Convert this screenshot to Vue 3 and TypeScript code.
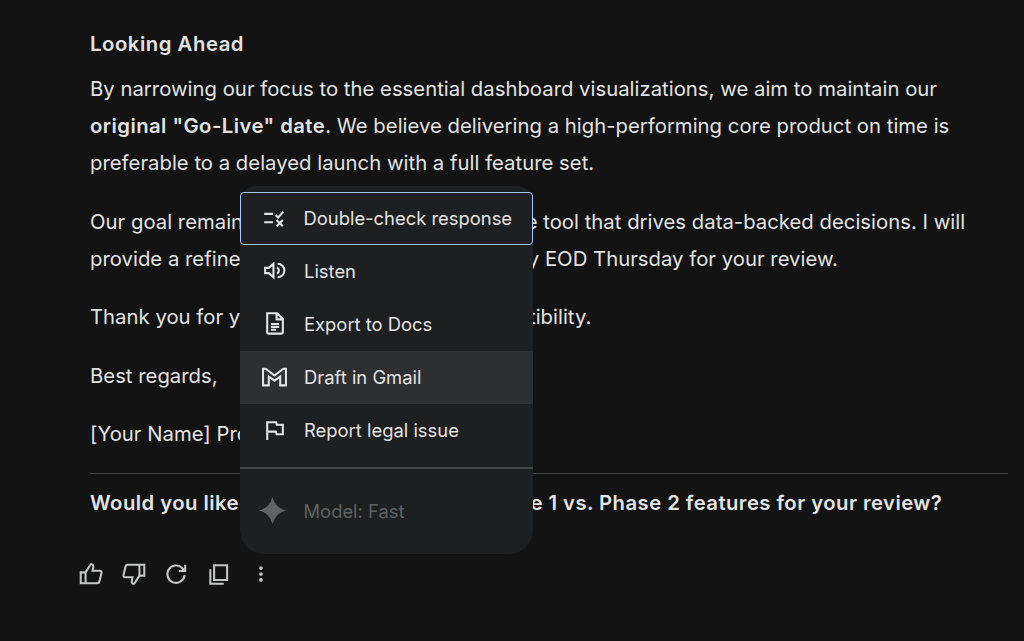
<script setup lang="ts">
const menu = [
  { id: 'check', label: 'Double-check response' },
  { id: 'listen', label: 'Listen' },
  { id: 'docs', label: 'Export to Docs' },
  { id: 'gmail', label: 'Draft in Gmail' },
  { id: 'flag', label: 'Report legal issue' },
]
</script>

<template>
  <main class="page">
    <article class="reply">
      <h3 class="title">Looking Ahead</h3>
      <p class="para">
        By narrowing our focus to the essential dashboard visualizations, we aim to maintain our<br />
        <strong>original "Go-Live" date</strong>. We believe delivering a high-performing core product on time is<br />
        preferable to a delayed launch with a full feature set.
      </p>
      <p class="para">
        Our goal remains to deliver a powerful, reliable tool that drives data-backed decisions. I will<br />
        provide a refined roadmap and firm timeline by EOD Thursday for your review.
      </p>
      <p class="para">Thank you for your understanding and compatibility.</p>
      <p class="para">Best regards,</p>
      <p class="para last">[Your Name] Project Manager</p>
      <hr class="rule" />
      <p class="follow">Would you like me to draft a list of the Phase 1 vs. Phase 2 features for your review?</p>
    </article>

    <div class="actions">
      <button class="act" aria-label="Good response">
        <svg viewBox="0 0 24 24"><path d="M2.500 10.500h4.500v10H2.500zM7 10.500l4.600-7.300c1.500-.6 2.700.4 2.500 2L13.400 9h6.800c1 0 1.800 1 1.500 2l-2 8.200c-.2.800-.9 1.300-1.700 1.300H7" /></svg>
      </button>
      <button class="act" aria-label="Bad response">
        <svg viewBox="0 0 24 24"><path d="M21.500 13.500H17v-10h4.500zM17 13.500l-4.600 7.300c-1.500.6-2.700-.4-2.500-2l.7-3.800H3.800c-1 0-1.800-1-1.500-2l2-8.200c.2-.8.9-1.300 1.700-1.300H17" /></svg>
      </button>
      <button class="act" aria-label="Redo">
        <svg viewBox="0 0 24 24"><path d="M20 13a8 8 0 1 1-2.300-6.500L20.500 9.300M20.500 3.500v5.800h-5.800" /></svg>
      </button>
      <button class="act" aria-label="Copy">
        <svg viewBox="0 0 24 24"><path d="M7.500 4h12v13.500h-12zM4 7.500V21h12.500" /></svg>
      </button>
      <button class="act" aria-label="More">
        <svg viewBox="0 0 24 24"><circle cx="12" cy="6.500" r="1.700" class="solid" /><circle cx="12" cy="12" r="1.700" class="solid" /><circle cx="12" cy="17.500" r="1.700" class="solid" /></svg>
      </button>
    </div>

    <div class="menu" role="menu">
      <button
        v-for="m in menu"
        :key="m.id"
        class="item"
        :class="{ focused: m.id === 'check', hover: m.id === 'gmail' }"
        role="menuitem"
      >
        <svg class="ico" viewBox="0 0 24 24">
          <template v-if="m.id === 'check'">
            <path d="M2 8.500h8.500M2 16.500h8.500M13 9.500l2.500 2.500 5-5.500M14 14.500l6 6M20 14.500l-6 6" />
          </template>
          <template v-else-if="m.id === 'listen'">
            <path d="M3 9.500v5h3.500l4.500 4V5.500l-4.500 4zM14.500 9a3.500 3.500 0 0 1 0 6M15 5.500a6.500 6.500 0 0 1 0 13" />
          </template>
          <template v-else-if="m.id === 'docs'">
            <path d="M5 2.200h9.500L20 7.700v12.500c0 .8-.7 1.500-1.500 1.500h-12c-.8 0-1.500-.7-1.500-1.500zM14 2.500V8h6M8.500 12.500h8M8.500 15.200h8M8.500 18h5" />
          </template>
          <template v-else-if="m.id === 'gmail'">
            <path d="M1 4.500v16h5.500v-8.500L12 16l5.500-4v8.500H23v-16h-2.500L12 11 3.500 4.500z" />
          </template>
          <template v-else>
            <path d="M5 22V5h8.500l.7 2.500H20v9h-6l-.7-2.500H5" />
          </template>
        </svg>
        <span>{{ m.label }}</span>
      </button>
      <div class="sep"></div>
      <div class="model">
        <svg class="spark" viewBox="0 0 32 32"><path d="M16 1Q19 13 31 16Q19 19 16 31Q13 19 1 16Q13 13 16 1z" /></svg>
        <span>Model: Fast</span>
      </div>
    </div>
  </main>
</template>

<style scoped>
.page {
  position: relative;
  height: 641px;
  overflow: hidden;
  padding: 25px 16px 0 90px;
  box-sizing: border-box;
  background: #131314;
  color: #e3e3e3;
  font-family: Inter, Roboto, sans-serif;
}
.title {
  margin: 0 0 8px;
  font-size: 20.300px;
  line-height: 37px;
  font-weight: 600;
  letter-spacing: 0.55px;
}
.para {
  margin: 0 0 21.500px;
  font-size: 20.300px;
  line-height: 37px;
  letter-spacing: 0.02px;
  white-space: nowrap;
}
.para.last {
  margin-bottom: 20.500px;
}
.para strong {
  font-weight: 600;
  letter-spacing: 0.45px;
}
.rule {
  margin: 0 0 10px;
  border: 0;
  border-top: 1px solid #444746;
}
.follow {
  margin: 0;
  font-size: 20.300px;
  line-height: 37px;
  font-weight: 600;
  letter-spacing: 0.45px;
  white-space: nowrap;
}
.actions {
  display: flex;
  gap: 14.500px;
  margin: 39px 0 0 -13px;
}
.act {
  width: 28px;
  height: 28px;
  padding: 1px;
  border: 0;
  background: none;
}
.act svg {
  display: block;
  width: 26px;
  height: 26px;
  fill: none;
  stroke: #c4c7c5;
  stroke-width: 1.900;
}
.act .solid {
  fill: #c4c7c5;
  stroke: none;
}
.menu {
  position: absolute;
  left: 240px;
  top: 186px;
  width: 293px;
  height: 368px;
  padding-top: 6px;
  box-sizing: border-box;
  background: #1e1f20;
  border-radius: 16px 16px 24px 24px;
}
.item {
  display: flex;
  align-items: center;
  gap: 17px;
  width: 100%;
  height: 53px;
  padding: 0 0 2px 22px;
  box-sizing: border-box;
  border: 0;
  background: none;
  color: #e3e3e3;
  font: 400 18.400px Inter, Roboto, sans-serif;
  text-align: left;
}
.item.focused {
  border: 1.500px solid #a8c7fa;
  border-radius: 4px;
  padding-left: 20.500px;
}
.item.hover {
  background: #2e2f31;
}
.ico {
  flex: none;
  width: 25px;
  height: 25px;
  fill: none;
  stroke: #e3e3e3;
  stroke-width: 2;
}
.sep {
  height: 1.500px;
  margin-top: 10px;
  background: #444746;
}
.model {
  display: flex;
  align-items: center;
  gap: 17px;
  height: 84px;
  padding-left: 17.500px;
  color: #5f6161;
  font-size: 18.400px;
}
.spark {
  flex: none;
  width: 29px;
  height: 29px;
  fill: #5f6361;
}
</style>

<style>
body {
  background: #131314;
}
</style>
